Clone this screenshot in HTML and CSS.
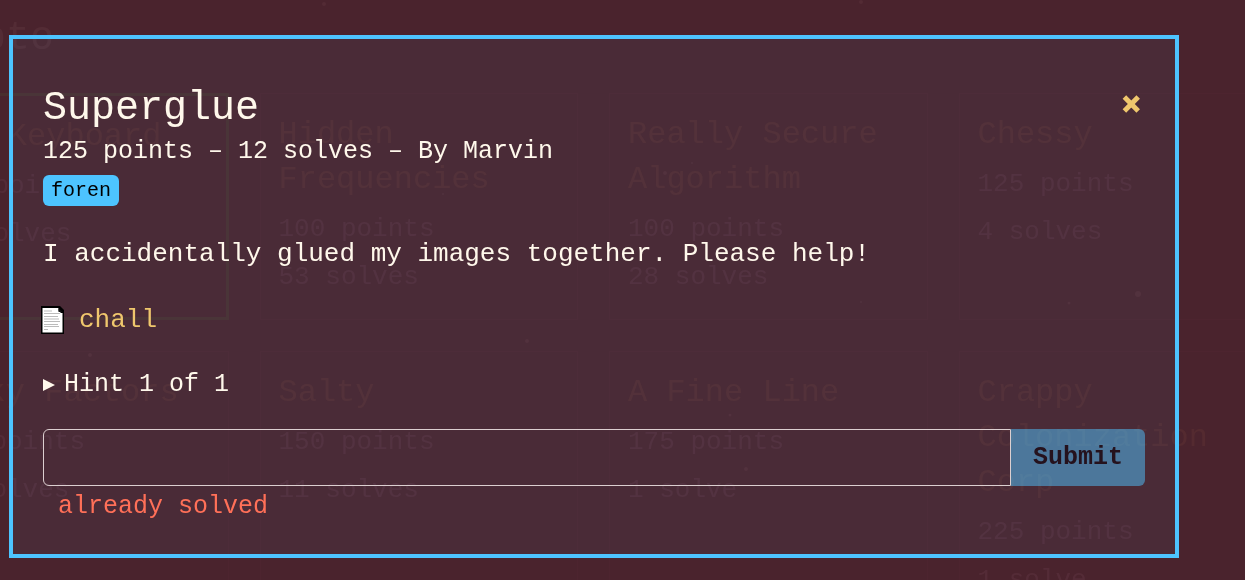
FILE: index.html
```html
<!DOCTYPE html>
<html lang="en">
<head>
<meta charset="utf-8">
<title>Superglue</title>
<link rel="stylesheet" href="styles.css">
</head>
<body>
<div class="page" aria-hidden="true">
  <div class="challenges">
    <h2 class="category">Crypto</h2>
    <div class="grid">
      <div class="card solved"><h3>The Keyboard</h3><p>100 points</p><p>47 solves</p></div>
      <div class="card"><h3>Hidden Frequencies</h3><p>100 points</p><p>53 solves</p></div>
      <div class="card"><h3>Really Secure Algorithm</h3><p>100 points</p><p>28 solves</p></div>
      <div class="card"><h3>Chessy</h3><p>125 points</p><p>4 solves</p></div>
      <div class="card"><h3>Risky Factors</h3><p>150 points</p><p>17 solves</p></div>
      <div class="card"><h3>Salty</h3><p>150 points</p><p>11 solves</p></div>
      <div class="card"><h3>A Fine Line</h3><p>175 points</p><p>1 solve</p></div>
      <div class="card"><h3>Crappy Colonization Corp</h3><p>225 points</p><p>1 solve</p></div>
    </div>
  </div>
</div>
<svg class="dust" width="1245" height="580" viewBox="0 0 1245 580" aria-hidden="true">
  <circle cx="324" cy="4" r="2"/><circle cx="861" cy="2" r="2"/><circle cx="90" cy="355" r="2"/>
  <circle cx="527" cy="341" r="2"/><circle cx="1138" cy="294" r="3"/><circle cx="1069" cy="303" r="1.5"/>
  <circle cx="692" cy="163" r="1"/><circle cx="665" cy="173" r="2"/><circle cx="730" cy="415" r="1.5"/>
  <circle cx="443" cy="194" r="1"/><circle cx="861" cy="302" r="1"/><circle cx="746" cy="469" r="2"/>
</svg>
<div class="overlay">
  <section class="modal" role="dialog" aria-labelledby="title">
    <header class="head">
      <h1 id="title">Superglue</h1>
      <button class="close" type="button" aria-label="Close">
        <svg width="20" height="20" viewBox="0 0 20 20"><path d="M3.4 3.1 17.2 16.9M17.2 3.1 3.4 16.9" stroke="currentColor" stroke-width="5"/></svg>
      </button>
    </header>
    <p class="meta">125 points – 12 solves – By Marvin</p>
    <span class="tag">foren</span>
    <p class="description">I accidentally glued my images together. Please help!</p>
    <a class="file" href="#chall">
      <svg width="20" height="28" viewBox="0 0 20 28" aria-hidden="true">
        <path d="M-2 0H17L21 4V28H-2Z" fill="#000"/>
        <path d="M-.5 2H15.5V4.5L18 7H19.5V26.5H-.5Z" fill="#fff"/>
        <path d="M15.5 2 19.5 6H15.5Z" fill="#111"/>
        <path d="M1 4h8v2H1Z" fill="#ddd"/>
        <path d="M1 7.5h16M1 10.5h14M1 13h15M1 15.5h16M1 18.5h14M1 20.5h15M1 23.5h4" stroke="#bbb"/>
      </svg>
      <span>chall</span>
    </a>
    <details class="hint">
      <summary>
        <svg width="12" height="12" viewBox="0 0 12 12" aria-hidden="true"><path d="M0 0 12 6 0 12Z" fill="currentColor"/></svg>
        <span>Hint 1 of 1</span>
      </summary>
    </details>
    <form class="flag">
      <input type="text" aria-label="Flag">
      <button type="button">Submit</button>
    </form>
    <p class="error">already solved</p>
  </section>
</div>
</body>
</html>
```
FILE: styles.css
```css
* { box-sizing: border-box; }

body {
  margin: 0;
  min-height: 100vh;
  background: #4a232d;
  color: #fff8eb;
  font-family: "Liberation Mono", monospace;
  font-size: 25px;
  line-height: 32px;
}

h1, h2, h3, p { margin: 0; font-weight: 400; }

button, input { font: inherit; color: inherit; }

/* Challenge list, dimmed behind the dialog */
.page {
  position: fixed;
  inset: 0;
  overflow: hidden;
}

.challenges { margin: 0 -32px 0 -90px; }

.category {
  padding: 15px 0 30px;
  font-size: 40px;
  line-height: 48px;
  color: rgba(255, 200, 200, 0.055);
}

.grid {
  display: grid;
  grid-template-columns: repeat(4, minmax(0, 1fr));
  gap: 31px;
}

.card {
  padding: 18px;
  border: 1px solid rgba(255, 120, 140, 0.02);
  font-size: 26px;
  line-height: 48px;
  color: rgba(255, 190, 220, 0.06);
}

.card h3 {
  margin-bottom: 3px;
  font-size: 32px;
  line-height: 45px;
  color: rgba(255, 170, 110, 0.06);
}

.card.solved { border: 3px solid rgba(80, 180, 60, 0.08); }

.dust {
  position: absolute;
  top: 0;
  left: 0;
  max-width: 100%;
  fill: rgba(255, 190, 200, 0.05);
}

/* Dialog */
.overlay {
  position: relative;
  padding: 35px 66px 22px 9px;
}

.modal {
  padding: 46px 30px 31px;
  border: 4px solid #4dc4ff;
  background: rgba(77, 196, 255, 0.052);
}

.head {
  display: flex;
  justify-content: space-between;
  align-items: flex-start;
  margin-bottom: 3px;
}

.head h1 { font-size: 40px; line-height: 48px; }

.close {
  display: flex;
  padding: 9px 4px;
  border: 0;
  background: none;
  color: #efc76d;
}

.tag {
  display: block;
  width: fit-content;
  margin-top: 7px;
  padding: 0 8px;
  border-radius: 6px;
  background: #4dc4ff;
  color: #000;
  font-size: 20px;
  line-height: 31px;
}

.description {
  margin: 28px 0 26px;
  font-size: 26px;
  line-height: 40px;
}

.file {
  display: flex;
  align-items: center;
  gap: 16px;
  width: fit-content;
  color: #efc76d;
  font-size: 26px;
  line-height: 40px;
  text-decoration: none;
}

.file svg { overflow: visible; }

.hint { margin: 25px 0 24px; line-height: 40px; }

.hint summary {
  display: flex;
  align-items: center;
  gap: 9px;
  list-style: none;
}

.flag { display: flex; }

.flag input {
  flex: 1;
  min-width: 0;
  height: 57px;
  padding: 0 15px;
  border: 1px solid #dccfd0;
  border-radius: 6px 0 0 6px;
  background: none;
  outline: 0;
}

.flag button {
  padding: 0 22px;
  border: 0;
  border-radius: 0 6px 6px 0;
  background: rgba(77, 196, 255, 0.5);
  color: #25121d;
  font-weight: 700;
}

.error {
  margin-top: 5px;
  padding-left: 15px;
  color: #ff7058;
}
```
